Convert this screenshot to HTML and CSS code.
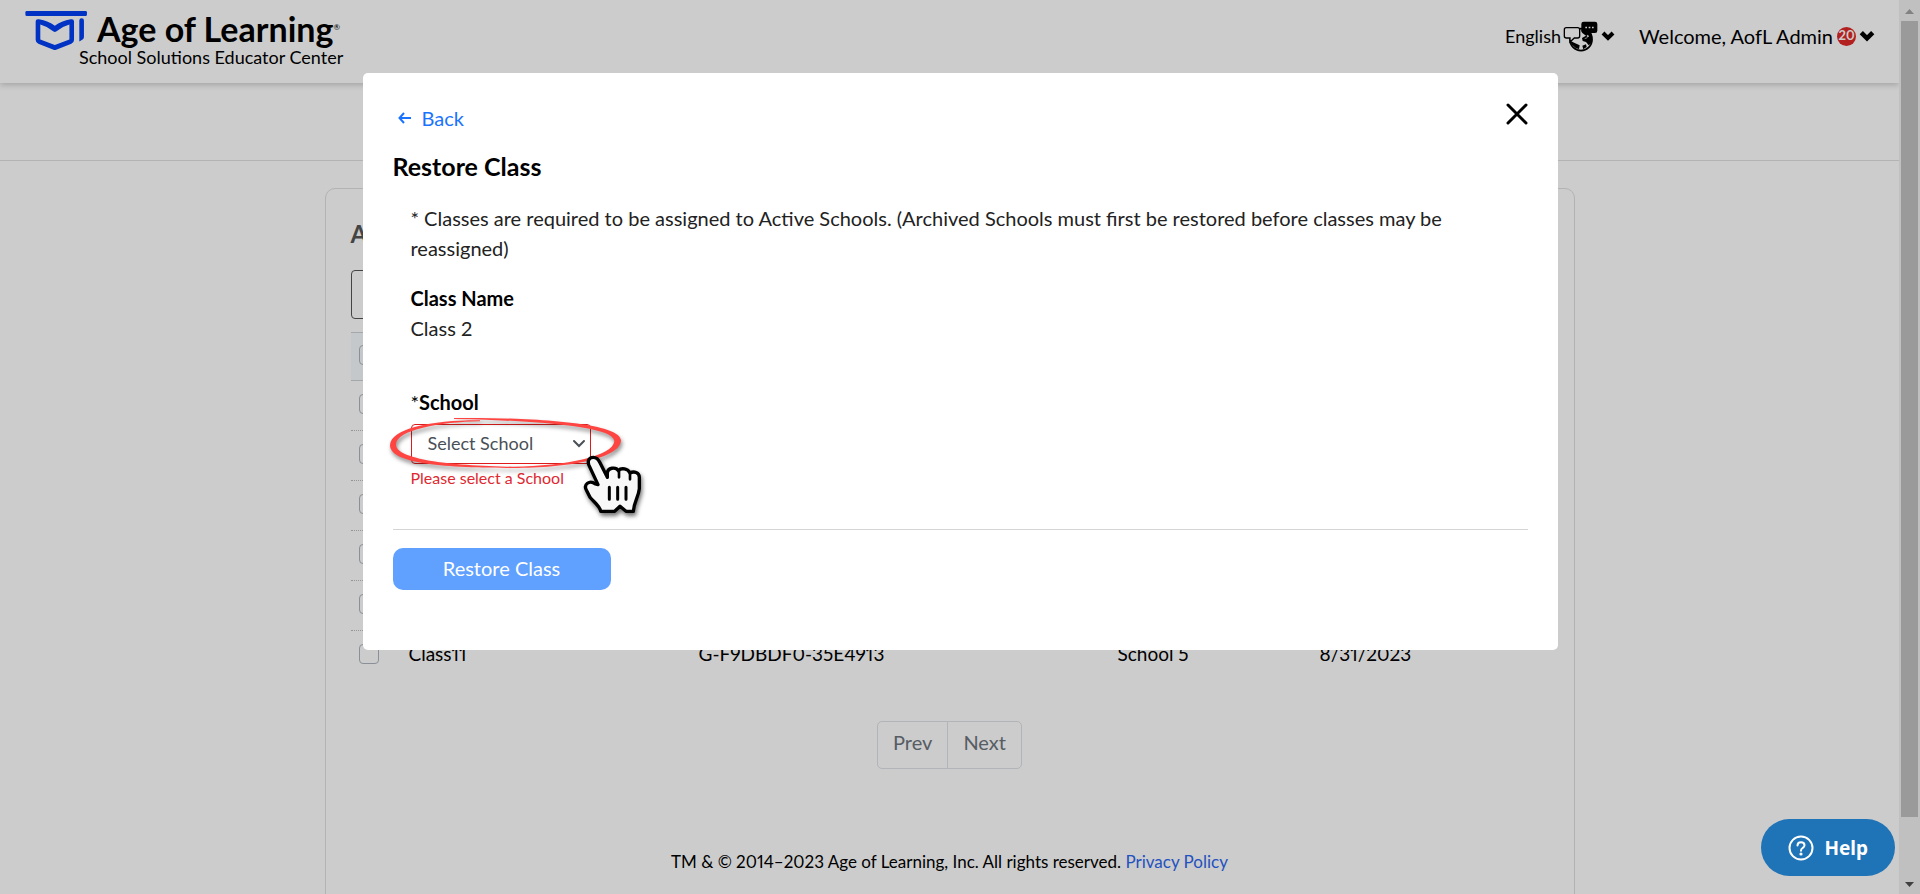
FILE: index.html
```html
<!DOCTYPE html>
<html lang="en">
<head>
<meta charset="utf-8">
<title>School Solutions Educator Center</title>
<link rel="stylesheet" href="styles.css">
</head>
<body>
<div class="shell">
  <div class="page">
    <header class="header">
      <div class="brand">
        <svg class="brand-mark" viewBox="75 30 188 124" aria-hidden="true">
          <rect x="75" y="33" width="186" height="15" rx="4"/>
          <path d="M106 65Q106 56 116 58Q145 63 164 78Q183 63 212 58Q222 56 222 65V121Q222 129 214 132L168 150Q164 152 160 150L114 132Q106 129 106 121ZM120 74V119L164 136L208 119V74Q186 80 168 95Q164 98 160 95Q142 80 120 74Z" fill-rule="evenodd"/>
          <path d="M238 62Q238 55 245 55Q252 55 252 62V112Q252 117 248 119L238 125Z"/>
        </svg>
        <div class="brand-text">
          <div class="brand-name">Age of Learning<span class="brand-reg">®</span></div>
          <div class="brand-sub">School Solutions Educator Center</div>
        </div>
      </div>
      <div class="tools">
        <button class="tool tool-lang" type="button">
          English
          <svg class="icon-lang" viewBox="249 64 105 93" aria-hidden="true">
            <circle cx="303" cy="120" r="33" fill="#fff" stroke="#000" stroke-width="5"/>
            <path d="M303 92L333 98Q341 112 335 130L326 137L318 127L308 124L306 115L318 108L308 101ZM272 124L284 130L299 137L297 148L288 146L274 134ZM307 138L318 134L320 142L310 149Z"/>
            <path d="M322 105l5 4-5 3zM314 117l8-3" stroke="#fff" stroke-width="2" fill="#fff"/>
            <path d="M259 84H293Q299 84 299 90V109Q299 115 293 115H283L270 127V115H259Q253 115 253 109V90Q253 84 259 84Z" fill="#fff" stroke="#000" stroke-width="4"/>
            <path d="M311 66H345Q352 66 352 73V93Q352 100 345 100H334L325 108L317 100H311Q304 100 304 93V73Q304 66 311 66Z"/>
            <path d="M316 81h5v5h-5zM326 81h5v5h-5zM336 81h5v5h-5z" fill="#fff"/>
          </svg>
          <svg class="chev" viewBox="0 0 14 10" aria-hidden="true"><path d="M2 2L7 7L12 2"/></svg>
        </button>
        <button class="tool tool-user" type="button">
          Welcome, AofL Admin
          <span class="badge">20</span>
          <svg class="chev chev-lg" viewBox="0 0 14 10" aria-hidden="true"><path d="M2 2L7 7L12 2"/></svg>
        </button>
      </div>
    </header>
    <div class="subnav"></div>
    <main class="card">
      <h1 class="card-title">A</h1>
      <input class="search" type="text" aria-label="Search classes">
      <table class="classes">
        <thead>
          <tr><th class="pick"><input type="checkbox" aria-label="Select all"></th><th class="c-name"></th><th class="c-id"></th><th class="c-school"></th><th></th></tr>
        </thead>
        <tbody>
          <tr><td><input type="checkbox" aria-label="Select row 1"></td><td></td><td></td><td></td><td></td></tr>
          <tr><td><input type="checkbox" aria-label="Select row 2"></td><td></td><td></td><td></td><td></td></tr>
          <tr><td><input type="checkbox" aria-label="Select row 3"></td><td></td><td></td><td></td><td></td></tr>
          <tr><td><input type="checkbox" aria-label="Select row 4"></td><td></td><td></td><td></td><td></td></tr>
          <tr><td><input type="checkbox" aria-label="Select row 5"></td><td></td><td></td><td></td><td></td></tr>
          <tr><td><input type="checkbox" aria-label="Select Class11"></td><td>Class11</td><td>G-F9DBDF0-35E4913</td><td>School 5</td><td>8/31/2023</td></tr>
        </tbody>
      </table>
      <nav class="pager" aria-label="Pages">
        <button type="button">Prev</button>
        <button type="button">Next</button>
      </nav>
      <footer class="footer">TM &amp; © 2014–2023 Age of Learning, Inc. All rights reserved. <a href="#privacy">Privacy Policy</a></footer>
    </main>
  </div>
  <div class="scrollbar" aria-hidden="true">
    <svg class="sb-arrow" viewBox="0 0 21 21"><path d="M6 14L10.500 9L15 14Z" fill="#a3a3a3"/></svg>
    <div class="sb-track"><div class="sb-thumb"></div></div>
    <svg class="sb-arrow" viewBox="0 0 21 21"><path d="M6 9L10.500 14L15 9Z" fill="#505050"/></svg>
  </div>
</div>

<div class="overlay">
  <section class="modal" role="dialog" aria-modal="true" aria-labelledby="modal-title">
    <div class="modal-top">
      <a class="back" href="#back">
        <svg class="icon-back" viewBox="0 0 14 12" aria-hidden="true"><path d="M13 6H2M6 1L1.500 6L6 11"/></svg>
        Back
      </a>
      <button class="close" type="button" aria-label="Close">
        <svg viewBox="0 0 22 22" aria-hidden="true"><path d="M2 2L20 20M20 2L2 20"/></svg>
      </button>
    </div>
    <h2 class="modal-title" id="modal-title">Restore Class</h2>
    <div class="modal-body">
      <p class="note">* Classes are required to be assigned to Active Schools. (Archived Schools must first be restored before classes may be reassigned)</p>
      <div class="label">Class Name</div>
      <div class="value">Class 2</div>
      <label class="label label-school" for="school"><span class="star">*</span>School</label>
      <div class="select-wrap">
        <select class="select" id="school"><option>Select School</option></select>
        <svg class="select-chev" viewBox="0 0 14 10" aria-hidden="true"><path d="M2 2L7 7L12 2"/></svg>
        <svg class="callout" viewBox="0 0 840 390" aria-hidden="true">
          <path class="ring" fill="#ff4542" d="M222 54C420 52 720 64 723 121C720 178 560 204 400 204C200 204 30 192 30 136C32 84 160 60 300 61L300 64C180 66 48 90 48 134C48 176 200 197 400 200C560 198 700 168 703 123C700 80 480 62 222 57Z"/>
          <g class="hand">
            <path d="M654 254L627 196C621 182 628 172 640 172C650 172 656 180 660 188L682 232V220C682 202 708 200 715 212C724 202 744 206 750 219C762 212 778 218 778 232V266C776 290 762 304 760 334H738L720 319L704 334H662C660 318 640 305 630 292L619 270C610 254 628 238 646 252L654 254Z" fill="#f8f8f8" stroke="#000" stroke-width="10" stroke-linejoin="round"/>
            <path d="M682 232V226M717 214V232M750 220V238" stroke="#000" stroke-width="8" stroke-linecap="round"/>
            <path d="M688 262V298M713 262V298M738 262V298" stroke="#000" stroke-width="9" stroke-linecap="round"/>
          </g>
        </svg>
      </div>
      <div class="error">Please select a School</div>
    </div>
    <div class="modal-foot"><button class="primary" type="button">Restore Class</button></div>
  </section>
</div>

<button class="help" type="button">
  <svg viewBox="0 0 26 26" aria-hidden="true"><circle cx="13" cy="13" r="11.500"/><path d="M9.500 10.500Q9.500 7.200 13 7.200Q16.500 7.200 16.500 10.200Q16.500 12 14.600 13Q13 13.900 13 15.800"/><circle class="dot" cx="13" cy="19" r="1.600"/></svg>
  Help
</button>
</body>
</html>
```
FILE: styles.css
```css
* { box-sizing: border-box; }
body {
  margin: 0;
  font-family: Lato, "Liberation Sans", sans-serif;
  font-size: 20px;
  line-height: 30px;
  font-variant-numeric: proportional-nums;
  color: #000;
  background: #fff;
}
button, input, select { font: inherit; color: inherit; }
button { cursor: pointer; }
.shell { display: flex; height: 100vh; overflow: hidden; }
.page { flex: 1; min-width: 0; }

.header {
  display: flex;
  justify-content: space-between;
  align-items: flex-start;
  height: 83px;
  padding: 10px 24px 0 25px;
  box-shadow: 0 2px 6px rgba(0, 0, 0, .2);
}
.brand { display: flex; align-items: flex-start; }
.brand-mark { width: 63px; height: 41px; fill: #0040f5; }
.brand-text { margin-left: 9px; }
.brand-name { font-size: 34px; line-height: 38px; font-weight: 700; }
.brand-reg { font-size: 8px; font-weight: 400; vertical-align: 12px; line-height: 8px; }
.brand-sub { margin-left: -18px; font-size: 18px; line-height: 18px; }
.tools { display: flex; gap: 24px; padding-top: 11px; }
.tool { display: flex; align-items: center; border: 0; padding: 0; background: none; height: 30px; }
.tool-lang { font-size: 18px; }
.icon-lang { width: 35px; height: 31px; margin: 0 3px 0 2px; }
.chev { width: 14px; height: 10px; fill: none; stroke: #000; stroke-width: 4; }
.chev-lg { width: 16px; height: 12px; margin-left: 3px; }
.badge {
  width: 19px; height: 19px; margin-left: 4px;
  border-radius: 50%;
  background: #e02828; color: #fff;
  font-size: 13px; line-height: 17px; font-weight: 700; text-align: center;
}
.subnav { height: 78px; border-bottom: 1px solid #e0e0e0; }

.card {
  max-width: 1250px;
  min-height: 760px;
  margin: 27px auto 0;
  padding: 29px 25px;
  border: 1px solid #e0e0e0;
  border-radius: 10px;
}
.card-title { margin: 0; font-size: 24px; line-height: 32px; color: #555; font-weight: 700; }
.search { display: block; width: 320px; height: 49px; margin: 20px 0 13px; border: 1px solid #555; border-radius: 4px; background: #fff; }
.classes { width: 100%; border-collapse: collapse; table-layout: fixed; font-size: 19px; }
.classes th, .classes td { height: 50px; padding: 0 8px 3px; text-align: left; }
.classes thead th { height: 48px; }
.classes thead tr { background: #f5fbfd; border-top: 1px solid #ccd2d5; border-bottom: 1px solid #ccd2d5; }
.classes tbody tr + tr { border-top: 1px dotted #bbb; }
.pick { width: 50px; }
.c-name { width: 290px; }
.c-id { width: 419px; }
.c-school { width: 202px; }
.classes input {
  appearance: none;
  display: block;
  width: 20px; height: 20px; margin: 0;
  border: 1px solid #adb5bd; border-radius: 4px;
}
.pager { display: flex; justify-content: center; margin-top: 40px; }
.pager button { height: 48px; padding: 0 15px 5px; border: 1px solid #dee2e6; background: #fff; color: #6c757d; }
.pager button:first-child { border-radius: 5px 0 0 5px; }
.pager button:last-child { border-radius: 0 5px 5px 0; margin-left: -1px; }
.footer { margin-top: 78px; font-size: 17px; text-align: center; }
.footer a { color: #2b67f0; text-decoration: none; }

.scrollbar { display: flex; flex-direction: column; width: 21px; background: #f1f1f1; }
.sb-arrow { width: 21px; height: 21px; flex: none; }
.sb-track { flex: 1; padding: 0 2px; }
.sb-thumb { height: 93.4%; background: #c1c1c1; }

.overlay { position: fixed; inset: 0; padding: 73px 24px 0; background: rgba(0, 0, 0, .2); }
.modal {
  max-width: 1195px;
  margin: 0 auto;
  padding: 20px 30px 60px;
  border-radius: 5px;
  background: #fff;
}
.modal-top { display: flex; justify-content: space-between; align-items: flex-start; }
.back { display: flex; align-items: center; gap: 10px; padding: 10px 5px 0; color: #1a73ff; text-decoration: none; }
.icon-back { width: 14px; height: 12px; fill: none; stroke: #1a73ff; stroke-width: 2; }
.close { display: flex; border: 0; padding: 0; margin-top: 10px; background: none; }
.close svg { width: 22px; height: 22px; stroke: #000; stroke-width: 3; stroke-linecap: round; }
.modal-title { margin: 17px 0 21px; font-size: 25px; line-height: 32px; font-weight: 700; }
.modal-body { padding: 0 18px 37px; border-bottom: 1px solid #d5d5d5; color: #222; }
.note { margin: 0 0 20px; }
.label { font-weight: 700; color: #000; }
.label-school { display: block; margin-top: 44px; }
.star { font-weight: 400; }
.select-wrap { position: relative; width: 180px; margin-top: 7px; }
.select {
  appearance: none;
  display: block;
  width: 100%; height: 40px;
  padding: 0 32px 2px 16px;
  border: 1px solid #dc1c1c; border-radius: 4px;
  background: #fff; color: #495057;
  font-size: 18px;
}
.select-chev { position: absolute; right: 5px; top: 15px; width: 14px; height: 10px; fill: none; stroke: #495057; stroke-width: 2; stroke-linecap: round; }
.callout { position: absolute; left: -31px; top: -24px; width: 280px; height: 130px; pointer-events: none; overflow: visible; }
.ring { filter: drop-shadow(4px 9px 6px rgba(0, 0, 0, .45)); }
.hand { filter: drop-shadow(4px 9px 6px rgba(0, 0, 0, .55)); }
.error { font-size: 16px; line-height: 28px; color: #e02830; }
.modal-foot { padding-top: 18px; }
.primary { display: block; width: 218px; height: 42px; border: 0; padding: 0 0 2px; border-radius: 10px; background: #60a0ff; color: #fff; }

.help {
  position: fixed; right: 25px; bottom: 18px;
  display: flex; align-items: center; gap: 10px;
  height: 57px; padding: 0 27px 0 27px;
  border: 0; border-radius: 29px;
  background: #1f73b7; color: #fff;
  font-family: "Noto Sans", sans-serif; font-weight: 700; font-size: 19px;
}
.help svg { width: 26px; height: 26px; fill: none; stroke: #fff; stroke-width: 2; stroke-linecap: round; }
.help .dot { fill: #fff; stroke: none; }
```
